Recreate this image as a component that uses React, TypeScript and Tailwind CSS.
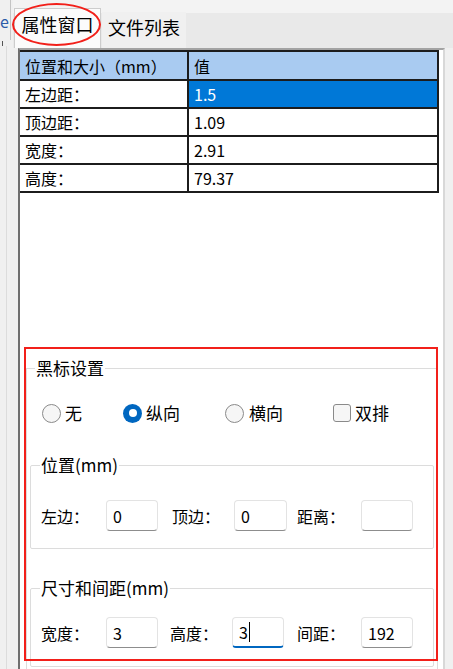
import React from 'react'

const rows = [
  { name: '左边距：', value: '1.5', selected: true },
  { name: '顶边距：', value: '1.09' },
  { name: '宽度：', value: '2.91' },
  { name: '高度：', value: '79.37' },
]

function Radio({ checked }: { checked?: boolean }) {
  if (checked) {
    return (
      <span className="flex h-[19px] w-[19px] items-center justify-center rounded-full bg-[#0067c0]">
        <span className="h-[8px] w-[8px] rounded-full bg-white" />
      </span>
    )
  }
  return <span className="h-[19px] w-[19px] rounded-full border border-[#8a8a8a] bg-[#f6f6f6]" />
}

function Field({ value, focused, className }: { value?: string; focused?: boolean; className: string }) {
  return (
    <div
      className={
        focused
          ? `flex h-[31px] items-center rounded-[4px] border border-[#e3e3e3] border-b-2 border-b-[#0067c0] bg-white pl-[6px] text-[16px] ${className}`
          : `flex h-[31px] items-center rounded-[4px] border border-[#e3e3e3] border-b-[#8d8d8d] bg-white pl-[6px] text-[16px] ${className}`
      }
    >
      <span>{value}</span>
      {focused && <span className="ml-px h-[20px] w-px bg-black" />}
    </div>
  )
}

export default function App() {
  return (
    <div className="relative flex h-[669px] w-[453px] overflow-hidden bg-[#f0f0f0] font-['Noto_Sans_CJK_SC',sans-serif] text-black">
      {/* cut-off neighbour tab */}
      <div className="flex w-[13px] shrink-0 flex-col">
        <div className="h-[40px] w-[11px] overflow-hidden border-r border-[#c4c4c4] pt-[11px] text-[16px] leading-[20px] text-[#2d5ca8]">
          e
        </div>
        <div className="ml-[2px] mt-px h-[5px] w-px bg-[#555]" />
        <div className="ml-[6px] flex-1 border-l border-[#dcdcdc]" />
      </div>

      <div className="flex min-w-0 flex-1 flex-col">
        {/* tabs */}
        <div className="flex h-[48px] shrink-0 items-end bg-[linear-gradient(to_bottom,#f3f3f3_13px,#e9e9e9_13px)] pl-px">
          <div className="flex h-[40px] w-[87px] items-start justify-center border border-b-0 border-[#cdcdcd] bg-[#fbfbfb] pt-[3px] text-[18px] leading-[24px]">
            属性窗口
          </div>
          <div className="ml-px flex h-[36px] w-[84px] items-start justify-center bg-[#f0f0f0] pt-[3px] text-[18px] leading-[24px]">
            文件列表
          </div>
        </div>

        {/* property panel */}
        <div className="ml-[5px] flex w-[427px] flex-1 flex-col border-l-2 border-r-2 border-t-2 border-l-[#6f6f6f] border-r-[#d8d8d8] border-t-[#a3a3a3] bg-white">
          <div className="w-[419px] border-b-2 border-r-2 border-t-2 border-[#1c1c1c] text-[16px] leading-[22px]">
            <div className="flex h-[27px] bg-[#a9cbf1]">
              <div className="flex w-[169px] items-center border-r-2 border-[#1c1c1c] pl-[5px]">位置和大小（mm）</div>
              <div className="flex flex-1 items-center pl-[5px]">值</div>
            </div>
            {rows.map((r) => (
              <div key={r.name} className="flex h-[28px] border-t-2 border-[#1c1c1c]">
                <div className="flex w-[169px] items-center border-r-2 border-[#1c1c1c] pl-[5px]">{r.name}</div>
                <div
                  className={
                    r.selected
                      ? 'flex flex-1 items-center bg-[#0078d7] pl-[5px] text-white'
                      : 'flex flex-1 items-center pl-[5px]'
                  }
                >
                  {r.value}
                </div>
              </div>
            ))}
          </div>

          {/* black mark settings */}
          <fieldset className="ml-[6px] mt-[163px] w-[412px] border border-[#dcdcdc] px-[3px] pb-[20px]">
            <legend className="ml-[5px] px-px text-[17px] leading-[24px]">黑标设置</legend>

            <div className="mt-[21px] flex h-[24px] items-center pl-[12px] text-[17px]">
              <label className="flex w-[81px] items-center gap-[4px]">
                <Radio />
                <span>无</span>
              </label>
              <label className="flex w-[102px] items-center gap-[4px]">
                <Radio checked />
                <span>纵向</span>
              </label>
              <label className="flex w-[108px] items-center gap-[5px]">
                <Radio />
                <span>横向</span>
              </label>
              <label className="flex items-center gap-[4px]">
                <span className="h-[18px] w-[18px] rounded-[3px] border border-[#8a8a8a] bg-[#f6f6f6]" />
                <span>双排</span>
              </label>
            </div>

            <fieldset className="mt-[28px] w-[404px] rounded-[2px] border border-[#dcdcdc] pb-[17px] pl-[10px]">
              <legend className="-ml-px px-px text-[17px] leading-[24px]">位置(mm)</legend>
              <div className="mt-[23px] flex items-center text-[16px]">
                <span className="w-[65px]">左边：</span>
                <Field value="0" className="w-[52px]" />
                <span className="ml-[14px] w-[62px]">顶边：</span>
                <Field value="0" className="w-[53px]" />
                <span className="ml-[10px] w-[64px]">距离：</span>
                <Field className="w-[52px]" />
              </div>
            </fieldset>

            <fieldset className="mt-[27px] w-[404px] rounded-[2px] border border-[#dcdcdc] pb-[18px] pl-[10px]">
              <legend className="-ml-px px-px text-[17px] leading-[24px]">尺寸和间距(mm)</legend>
              <div className="mt-[17px] flex items-center text-[16px]">
                <span className="w-[65px]">宽度：</span>
                <Field value="3" className="w-[52px]" />
                <span className="ml-[12px] w-[62px]">高度：</span>
                <Field value="3" focused className="w-[52px]" />
                <span className="ml-[13px] w-[64px]">间距：</span>
                <Field value="192" className="w-[52px]" />
              </div>
            </fieldset>
          </fieldset>
        </div>
      </div>

      {/* annotations */}
      <div className="pointer-events-none absolute left-[12px] top-[3px] h-[43px] w-[89px] rounded-[50%] border-2 border-[#f2201a]" />
      <div className="pointer-events-none absolute left-[24px] top-[347px] h-[314px] w-[414px] border-2 border-[#f2201a]" />
    </div>
  )
}
